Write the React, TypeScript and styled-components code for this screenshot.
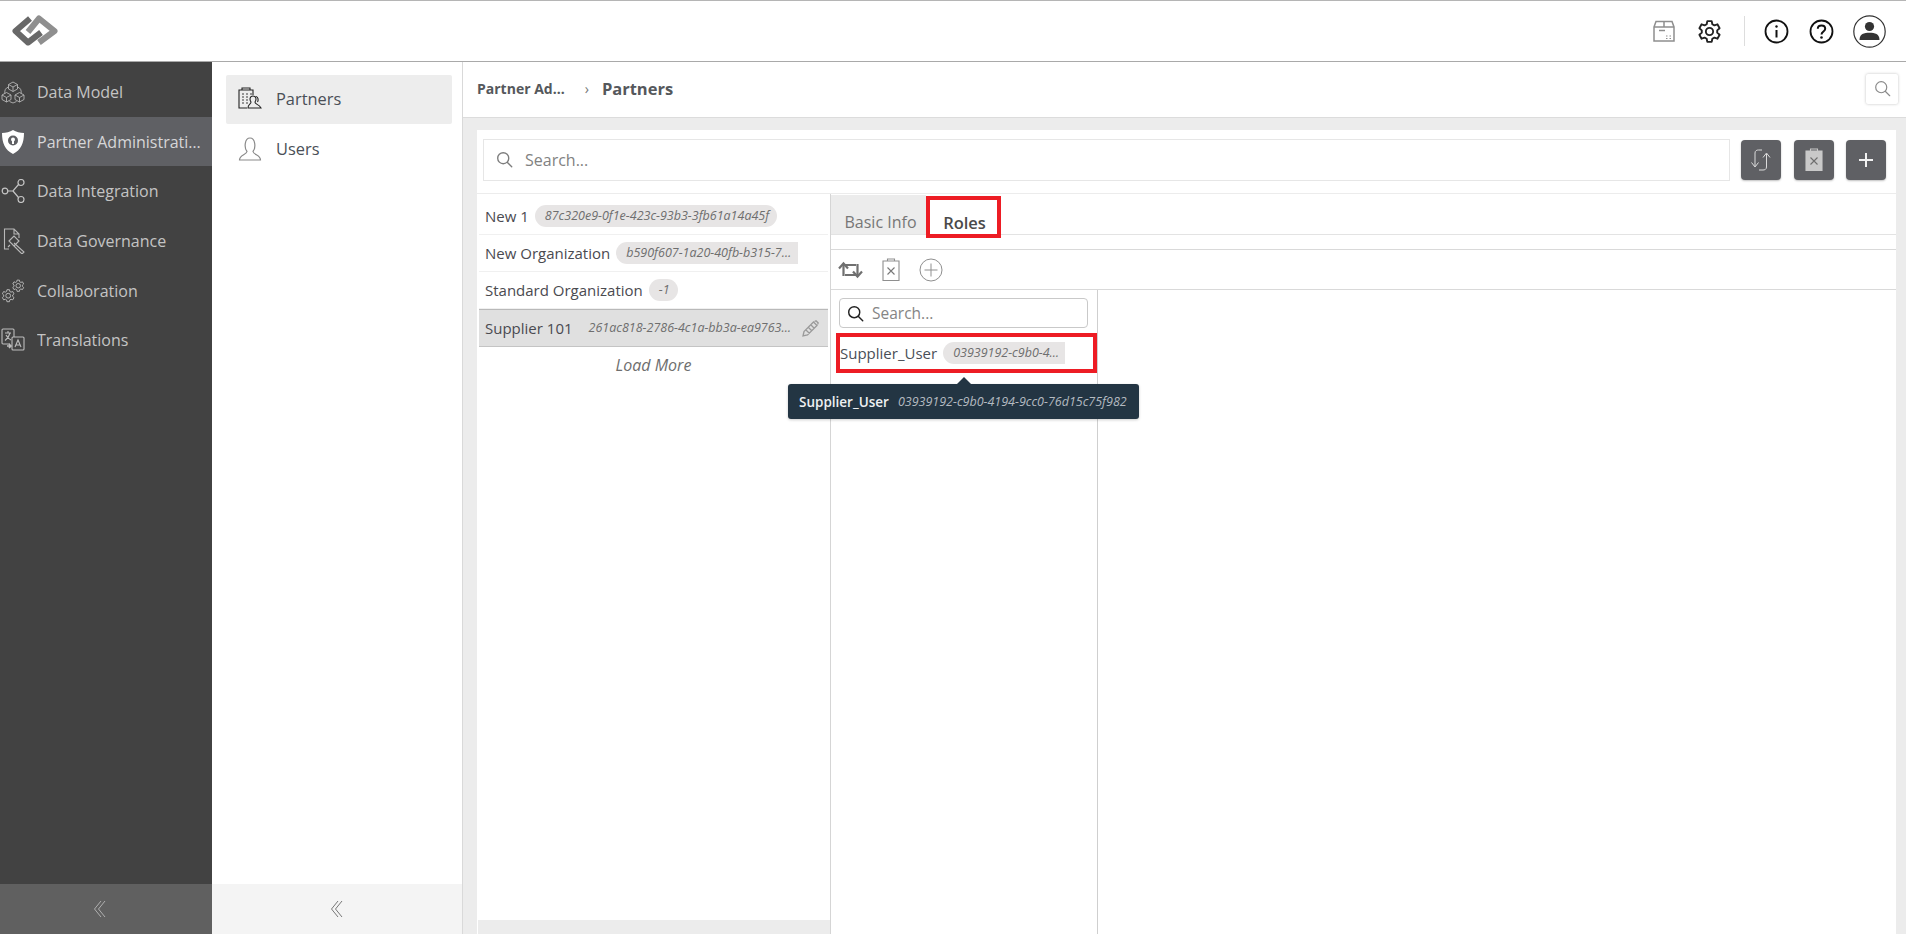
import React from "react";
import styled, { createGlobalStyle } from "styled-components";

const GlobalStyle = createGlobalStyle`
  html, body {
    margin: 0;
    padding: 0;
    height: 100%;
    overflow: hidden;
    background: #fff;
    font-family: "Open Sans", "Liberation Sans", sans-serif;
  }
  * { box-sizing: border-box; }
`;

const Page = styled.div`
  width: 1906px;
  height: 934px;
  display: flex;
  flex-direction: column;
  overflow: hidden;
`;

const TopBar = styled.header`
  height: 62px;
  flex: none;
  display: flex;
  align-items: center;
  justify-content: space-between;
  background: #fff;
  border-top: 1px solid #b5b5b5;
  border-bottom: 1px solid #a9a9a9;
  padding: 0 20px 0 12px;
`;

const TopIcons = styled.div`
  display: flex;
  align-items: center;
`;

const TopDivider = styled.div`
  width: 1px;
  height: 30px;
  background: #ddd;
  margin: 0 19px 0 22px;
`;

const Body = styled.div`
  flex: 1;
  display: flex;
  min-height: 0;
`;

const Sidebar = styled.nav`
  width: 212px;
  flex: none;
  display: flex;
  flex-direction: column;
  background: #424242;
`;

const SideList = styled.div`
  flex: 1;
  padding-top: 5px;
`;

const SideItem = styled.div<{ $active?: boolean }>`
  height: 49.7px;
  display: flex;
  align-items: center;
  gap: 12px;
  padding-left: 1px;
  color: ${(p) => (p.$active ? "#d6d6d8" : "#c4c4c4")};
  background: ${(p) => (p.$active ? "#5f6064" : "transparent")};
  font-size: 16px;
  white-space: nowrap;
  overflow: hidden;
`;

const SideLabel = styled.span`
  width: 168px;
  overflow: hidden;
  text-overflow: ellipsis;
`;

const CollapseBar = styled.div<{ $light?: boolean }>`
  height: 50px;
  flex: none;
  display: flex;
  align-items: center;
  justify-content: center;
  padding-right: ${(p) => (p.$light ? "0" : "12px")};
  background: ${(p) => (p.$light ? "#f4f4f4" : "#606060")};
  color: ${(p) => (p.$light ? "#777" : "#b0b0b0")};
`;

const SubNav = styled.aside`
  width: 251px;
  flex: none;
  display: flex;
  flex-direction: column;
  background: #fff;
  border-right: 1px solid #d9d9d9;
`;

const SubList = styled.div`
  flex: 1;
  padding: 13px 10px 0 14px;
  display: flex;
  flex-direction: column;
  gap: 1px;
`;

const SubItem = styled.div<{ $active?: boolean }>`
  height: 49px;
  display: flex;
  align-items: center;
  gap: 14px;
  padding: 0 0 2px 12px;
  border-radius: 2px;
  font-size: 16.4px;
  color: #4a4f57;
  background: ${(p) => (p.$active ? "#ededed" : "transparent")};
`;

const Main = styled.main`
  flex: 1;
  min-width: 0;
  display: flex;
  flex-direction: column;
  background: #ececec;
`;

const Crumbs = styled.div`
  height: 56px;
  flex: none;
  display: flex;
  align-items: center;
  background: #fff;
  border-bottom: 1px solid #dcdcdc;
  padding: 0 8px 2px 14px;
  margin-bottom: 12px;
`;

const CrumbParent = styled.span`
  font-size: 14px;
  font-weight: 700;
  color: #55585c;
`;

const CrumbSep = styled.span`
  font-size: 14px;
  color: #777;
  margin: 0 13px 0 20px;
`;

const CrumbCurrent = styled.span`
  font-size: 16.5px;
  font-weight: 700;
  color: #55585c;
`;

const CrumbSearch = styled.div`
  margin-left: auto;
  width: 32px;
  height: 30px;
  display: flex;
  align-items: center;
  justify-content: center;
  background: #fff;
  border-radius: 2px;
  box-shadow: 0 0 3px rgba(0, 0, 0, 0.25);
`;

const Card = styled.section`
  flex: 1;
  min-height: 0;
  display: flex;
  flex-direction: column;
  background: #fff;
  margin: 0 10px 0 14px;
`;

const SearchRow = styled.div`
  height: 64px;
  flex: none;
  display: flex;
  align-items: center;
  gap: 12.5px;
  padding: 0 10px 4px 6px;
  border-bottom: 1px solid #ececec;
`;

const SearchBox = styled.div`
  flex: 1;
  height: 42px;
  display: flex;
  align-items: center;
  gap: 12px;
  padding-left: 12px;
  margin-right: -1.5px;
  border: 1px solid #e6e6e6;
  font-size: 16px;
  color: #828282;
`;

const ActionButton = styled.div`
  width: 40px;
  height: 40px;
  display: flex;
  align-items: center;
  justify-content: center;
  background: #5f6064;
  border-radius: 4px;
  box-shadow: 0 1px 2px rgba(0, 0, 0, 0.25);
`;

const Split = styled.div`
  flex: 1;
  min-height: 0;
  display: flex;
`;

const ListColumn = styled.div`
  width: 354px;
  flex: none;
  display: flex;
  flex-direction: column;
  border-right: 1px solid #d5d5d5;
`;

const ListItems = styled.div`
  flex: 1;
  padding: 4px 2px 0 2px;
`;

const ListRow = styled.div<{ $selected?: boolean }>`
  height: ${(p) => (p.$selected ? "38px" : "37px")};
  display: flex;
  align-items: center;
  gap: 6px;
  padding: 0 9px 0 6px;
  font-size: 15px;
  color: #4a4a50;
  white-space: nowrap;
  background: ${(p) => (p.$selected ? "#e0e0e0" : "#fff")};
  border-bottom: 1px solid ${(p) => (p.$selected ? "#c4c4c4" : "#f0f0f0")};
  border-top: ${(p) => (p.$selected ? "1px solid #b9b9b9" : "none")};
`;

const IdChip = styled.span<{ $width?: number; $plain?: boolean }>`
  display: inline-block;
  height: 22px;
  line-height: 22px;
  padding: 0 2px 0 10px;
  border-radius: 11px 0 0 11px;
  font-size: 12.5px;
  font-style: italic;
  color: #6e6e6e;
  background: ${(p) => (p.$plain ? "transparent" : "#e7e5e5")};
  max-width: ${(p) => (p.$width ? `${p.$width}px` : "none")};
  overflow: hidden;
  text-overflow: ellipsis;
  white-space: nowrap;
`;

const RoundChip = styled(IdChip)`
  padding: 0 8px 0 10px;
  border-radius: 11px;
`;

const EditIcon = styled.span`
  margin-left: auto;
  display: flex;
`;

const LoadMore = styled.div`
  height: 36px;
  display: flex;
  align-items: center;
  justify-content: center;
  font-size: 16px;
  font-style: italic;
  color: #6e6e6e;
`;

const ListFooter = styled.div`
  height: 14px;
  flex: none;
  margin-left: 1px;
  background: #ececec;
`;

const Detail = styled.div`
  flex: 1;
  min-width: 0;
  display: flex;
  flex-direction: column;
`;

const Tabs = styled.div`
  height: 41px;
  flex: none;
  display: flex;
  border-bottom: 1px solid #e3e3e3;
`;

const Tab = styled.div<{ $active?: boolean }>`
  height: ${(p) => (p.$active ? "42px" : "39px")};
  margin-top: ${(p) => (p.$active ? "2px" : "1px")};
  display: flex;
  align-items: center;
  justify-content: center;
  position: relative;
  z-index: 1;
  padding: ${(p) => (p.$active ? "10px 0 0 2px" : "15px 0 0 4px")};
  width: ${(p) => (p.$active ? "75px" : "95px")};
  font-size: ${(p) => (p.$active ? "16.5px" : "16px")};
  color: ${(p) => (p.$active ? "#4a4a4a" : "#777")};
  font-weight: ${(p) => (p.$active ? 600 : 400)};
  background: ${(p) => (p.$active ? "#fff" : "#ececec")};
  border: ${(p) => (p.$active ? "4px solid #ed1c24" : "none")};
`;

const TabGap = styled.div`
  height: 14px;
  flex: none;
`;

const Toolbar = styled.div`
  height: 41px;
  flex: none;
  display: flex;
  align-items: center;
  gap: 19px;
  padding-left: 7px;
  border-top: 1px solid #d9d9d9;
  border-bottom: 1px solid #d9d9d9;
`;

const RolesArea = styled.div`
  flex: 1;
  min-height: 0;
  display: flex;
`;

const RolesPane = styled.div`
  width: 267px;
  flex: none;
  position: relative;
  padding: 8px 9px 0 8px;
  border-right: 1px solid #cfcfcf;
`;

const RoleSearch = styled.div`
  height: 30px;
  display: flex;
  align-items: center;
  gap: 8px;
  padding-left: 7px;
  border: 1px solid #c9c9c9;
  border-radius: 4px;
  font-size: 15.5px;
  color: #858585;
`;

const RoleRow = styled.div`
  width: 261px;
  height: 40px;
  margin: 5px 0 0 -3px;
  display: flex;
  align-items: center;
  gap: 6px;
  border: 4px solid #ed1c24;
  font-size: 15px;
  color: #4a4f57;
  white-space: nowrap;
  overflow: hidden;
`;

const Tooltip = styled.div`
  position: absolute;
  left: -43px;
  top: 94px;
  z-index: 5;
  width: 351px;
  height: 35px;
  display: flex;
  align-items: center;
  gap: 9px;
  padding-left: 11px;
  background: #233543;
  border-radius: 3px;
  color: #eef0f2;
  font-size: 13.5px;
  font-weight: 600;
  white-space: nowrap;
  box-shadow: 0 1px 3px rgba(0, 0, 0, 0.2);
  &::before {
    content: "";
    position: absolute;
    left: 169px;
    top: -7px;
    border-left: 7px solid transparent;
    border-right: 7px solid transparent;
    border-bottom: 7px solid #233543;
  }
`;

const TooltipId = styled.span`
  font-size: 12.5px;
  font-weight: 400;
  font-style: italic;
  color: #b4bac0;
`;

const Empty = styled.div`
  flex: 1;
`;

const TopIcon = styled.span<{ $gap?: number }>`
  display: flex;
  margin-left: ${(p) => p.$gap ?? 0}px;
`;

const Logo = () => (
  <svg width="46" height="32" viewBox="0 0 46 32" fill="none" strokeWidth="6" strokeLinejoin="round">
    <path d="M16 17 L27 3.5 L42.5 16 L27 27.5" stroke="#8f8f8f" />
    <path d="M18 3.5 L3.5 16 L16 27.5 L29 17.5" stroke="#686868" />
  </svg>
);

const Box3d = () => (
  <svg width="24" height="24" viewBox="0 0 24 24" fill="none" stroke="#b4b4b4" strokeWidth="0.9">
    <path d="M12 2 L16.5 4.5 V9 L12 11.5 L7.5 9 V4.5 Z M7.5 4.5 L12 7 L16.5 4.5 M12 7 V11.5" />
    <path d="M5.5 12.5 L10 15 V19.5 L5.5 22 L1 19.5 V15 Z M1 15 L5.5 17.5 L10 15 M5.5 17.5 V22" />
    <path d="M18.5 12.5 L23 15 V19.5 L18.5 22 L14 19.5 V15 Z M14 15 L18.5 17.5 L23 15 M18.5 17.5 V22" />
    <path d="M7.5 7 C4.5 8 3.5 10 3.8 13.5 M16.5 7 C19.5 8 20.5 10 20.2 13.5 M8.5 21.5 L12 23 L15.5 21.5" />
  </svg>
);

const Shield = () => (
  <svg width="24" height="26" viewBox="0 0 24 26">
    <path d="M12 1 C15 3 19 4 23 4 C23 14 20 21 12 25 C4 21 1 14 1 4 C5 4 9 3 12 1 Z" fill="#fff" />
    <circle cx="12" cy="11.5" r="5" fill="#5f6064" />
    <circle cx="12" cy="10.5" r="2" fill="#fff" />
    <rect x="11" y="11" width="2" height="4" fill="#fff" />
  </svg>
);

const Nodes = () => (
  <svg width="24" height="24" viewBox="0 0 24 24" fill="none" stroke="#c4c4c4" strokeWidth="1.2">
    <circle cx="4" cy="12" r="2.8" />
    <circle cx="20" cy="3.5" r="3" />
    <circle cx="20" cy="20.5" r="3" />
    <path d="M7 12 H12 L17.5 5.5 M12 12 L17.5 18.5" />
  </svg>
);

const Gavel = () => (
  <svg width="24" height="26" viewBox="0 0 24 26" fill="none" stroke="#b8b8b8" strokeWidth="1.1">
    <path d="M8 21 H3.5 V1 H13 L18 6 V10 M13 1 V6 H18" />
    <path d="M8 13 L13 8 L18 13 L13 18 Z M13 15 L23 24 L21 26 L11 16 M7 19 L9 17" />
  </svg>
);

const gearPath =
  "M9.9 2 H14.1 L14.7 5 L16.7 6.1 L19.6 5.1 L21.7 8.9 L19.4 10.9 V13.1 L21.7 15.1 L19.6 18.9 L16.7 17.9 L14.7 19 L14.1 22 H9.9 L9.3 19 L7.3 17.9 L4.4 18.9 L2.3 15.1 L4.6 13.1 V10.9 L2.3 8.9 L4.4 5.1 L7.3 6.1 L9.3 5 Z";

const Gears = () => (
  <svg width="24" height="24" viewBox="0 0 24 24" fill="none" stroke="#b8b8b8">
    <g transform="translate(10.5 0) scale(0.56)" strokeWidth="1.7">
      <path d={gearPath} />
      <circle cx="12" cy="12" r="4" />
    </g>
    <g transform="translate(0 9.5) scale(0.6)" strokeWidth="1.6">
      <path d={gearPath} />
      <circle cx="12" cy="12" r="4" />
    </g>
  </svg>
);

const Translate = () => (
  <svg width="24" height="24" viewBox="0 0 24 24" fill="none" stroke="#bdbdbd" strokeWidth="1.1">
    <path d="M9 16 H2 a1 1 0 0 1 -1 -1 V2 a1 1 0 0 1 1 -1 H12 a1 1 0 0 1 1 1 V9" />
    <path d="M12 9 H22 a1 1 0 0 1 1 1 V21 a1 1 0 0 1 -1 1 H12 a1 1 0 0 1 -1 -1 V10 a1 1 0 0 1 1 -1 Z" />
    <path d="M4 5 H10 M7 3 V5 M9 5 C8 9 6 11 4 12.5 M5 7 C6 9 8 11 10 12" />
    <path d="M14 19 L17 12 L20 19 M15 17 H19" />
    <path d="M6 18 H10 M8 16 L10 18 L8 20" strokeWidth="1.6" />
  </svg>
);

const DoubleChevron = () => (
  <svg width="14" height="18" viewBox="0 0 14 18" fill="none" stroke="currentColor" strokeWidth="1">
    <path d="M8 1 L1.5 9 L8 17" />
    <path d="M12 1 L5.5 9 L12 17" />
  </svg>
);

const PartnersIcon = () => (
  <svg width="24" height="24" viewBox="0 0 24 24" fill="none" stroke="#222" strokeWidth="1.1">
    <path d="M9 21 H1 V3 H15 V8 M4 3 V1 H12 V3" />
    <path d="M4 7 H6 M8 7 H10 M12 7 H14 M4 10 H6 M8 10 H10 M4 13 H6 M8 13 H10 M4 16 H6 M8 16 H10" strokeWidth="1.6" stroke="#777" />
    <path d="M10 21 C10 17 13 17.5 13 15 C11.5 13 11.5 9 15 9 C18.5 9 18.5 13 17 15 C17 17.5 21 17 23 21 Z" />
    <path d="M18 9.5 C20.5 10 20.5 13.5 19.5 15" />
  </svg>
);

const UserIcon = () => (
  <svg width="24" height="24" viewBox="0 0 24 24" fill="none" stroke="#8a8a8a" strokeWidth="1.2">
    <path d="M1.5 23 C1.5 18 8.5 18 9 14.5 C6 11 6.5 1 12 1 C17.5 1 18 11 15 14.5 C15.5 18 22.5 18 22.5 23 Z" />
  </svg>
);

const Magnifier = ({ size, color, weight }: { size: number; color: string; weight: number }) => (
  <svg width={size} height={size} viewBox="0 0 20 20" fill="none" stroke={color} strokeWidth={weight} strokeLinecap="round">
    <circle cx="8.5" cy="8.5" r="6.5" />
    <path d="M13.5 13.5 L18.5 18.5" />
  </svg>
);

const PackageIcon = () => (
  <svg width="22" height="22" viewBox="0 0 22 22" fill="none" stroke="#8e8e8e" strokeWidth="1.5">
    <path d="M1 7 L3 1.5 H19 L21 7 V21 H1 Z M1 7 H21 M11 1.5 V7" />
    <path d="M6 10.5 H12" />
    <path d="M13 16 H14.5 M16.5 16 H18 M13 18.5 H14.5 M16.5 18.5 H18" strokeWidth="1" />
  </svg>
);

const GearIcon = () => (
  <svg width="25" height="25" viewBox="0 0 24 24" fill="none" stroke="#222" strokeWidth="1.8" strokeLinejoin="round">
    <path d={gearPath} />
    <circle cx="12" cy="12" r="3.5" />
  </svg>
);

const InfoIcon = () => (
  <svg width="25" height="25" viewBox="0 0 25 25" fill="none" stroke="#111" strokeWidth="1.8">
    <circle cx="12.5" cy="12.5" r="11" />
    <path d="M12.5 11 V18.5" strokeWidth="2" />
    <circle cx="12.5" cy="7.5" r="1.2" fill="#111" stroke="none" />
  </svg>
);

const HelpIcon = () => (
  <svg width="25" height="25" viewBox="0 0 25 25" fill="none" stroke="#111" strokeWidth="1.8">
    <circle cx="12.5" cy="12.5" r="11" />
    <path d="M8.8 9.8 C8.8 5.5 16.2 5.5 16.2 9.8 C16.2 12.5 12.5 12.5 12.5 15.5" strokeWidth="2" />
    <circle cx="12.5" cy="18.5" r="1.3" fill="#111" stroke="none" />
  </svg>
);

const AvatarIcon = () => (
  <svg width="33" height="33" viewBox="0 0 33 33" fill="none">
    <circle cx="16.5" cy="16.5" r="15.7" stroke="#333" strokeWidth="1.2" />
    <circle cx="16.5" cy="11.5" r="4.6" fill="#333" />
    <path d="M6.5 25 C6.5 19 11 17.8 16.5 17.8 C22 17.8 26.5 19 26.5 25 Z" fill="#333" />
  </svg>
);

const SyncIcon = () => (
  <svg width="22" height="24" viewBox="0 0 22 24" fill="none" stroke="#dcdcdc" strokeWidth="1">
    <path d="M5 18 V5 C5 2.5 7 2 8.5 2 H12" />
    <path d="M1.5 14.5 L5 19 L8.5 14.5" />
    <path d="M16.5 6 V19 C16.5 21.5 14.5 22 13 22 H9" />
    <path d="M13 9.5 L16.5 5 L20 9.5" />
  </svg>
);

const ClipboardX = ({ fill, stroke, mark }: { fill: string; stroke: string; mark: string }) => (
  <svg width="18" height="23" viewBox="0 0 18 23" fill={fill} stroke={stroke} strokeWidth="1.1">
    <path d="M5.5 3 V1 H12.5 V3" fill="none" />
    <path d="M1 3 H17 V22.5 H1 Z" />
    <path d="M5.5 9.5 L12.5 16.5 M12.5 9.5 L5.5 16.5" stroke={mark} fill="none" />
  </svg>
);

const PlusIcon = () => (
  <svg width="18" height="18" viewBox="0 0 18 18" stroke="#f2f2f2" strokeWidth="2">
    <path d="M9 2 V16 M2 9 H16" />
  </svg>
);

const PencilIcon = () => (
  <svg width="17" height="17" viewBox="0 0 17 17" fill="none" stroke="#9a9a9a" strokeWidth="1.3">
    <path d="M1 16 L2 11.5 L11.5 2 L15 5.5 L5.5 15 Z M4 10 L7.5 13.5 M6.5 7.5 L10 11 M9 5 L12.5 8.5" />
    <path d="M12.5 1.5 L14 0.8 L16.2 3 L15.5 4.5" />
  </svg>
);

const RefreshIcon = () => (
  <svg width="25" height="18" viewBox="0 0 25 18" fill="none" stroke="#707070" strokeWidth="2.2">
    <path d="M5.5 15 V4 H18" />
    <path d="M1 7.5 L5.5 2.5 L10 7.5" />
    <path d="M19.5 3 V14 H7" />
    <path d="M15 10.5 L19.5 15.5 L24 10.5" />
  </svg>
);

const CirclePlus = () => (
  <svg width="24" height="24" viewBox="0 0 24 24" fill="none" stroke="#8f8f8f" strokeWidth="1">
    <circle cx="12" cy="12" r="11" />
    <path d="M12 5.5 V18.5 M5.5 12 H18.5" />
  </svg>
);

const sideItems = [
  { label: "Data Model", icon: <Box3d /> },
  { label: "Partner Administration", icon: <Shield />, active: true },
  { label: "Data Integration", icon: <Nodes /> },
  { label: "Data Governance", icon: <Gavel /> },
  { label: "Collaboration", icon: <Gears /> },
  { label: "Translations", icon: <Translate /> },
];

export default function App() {
  return (
    <Page>
      <GlobalStyle />
      <TopBar>
        <Logo />
        <TopIcons>
          <PackageIcon />
          <TopIcon $gap={22}>
            <GearIcon />
          </TopIcon>
          <TopDivider />
          <InfoIcon />
          <TopIcon $gap={20}>
            <HelpIcon />
          </TopIcon>
          <TopIcon $gap={19}>
            <AvatarIcon />
          </TopIcon>
        </TopIcons>
      </TopBar>
      <Body>
        <Sidebar>
          <SideList>
            {sideItems.map((item) => (
              <SideItem key={item.label} $active={item.active}>
                {item.icon}
                <SideLabel>{item.label}</SideLabel>
              </SideItem>
            ))}
          </SideList>
          <CollapseBar>
            <DoubleChevron />
          </CollapseBar>
        </Sidebar>
        <SubNav>
          <SubList>
            <SubItem $active>
              <PartnersIcon />
              Partners
            </SubItem>
            <SubItem>
              <UserIcon />
              Users
            </SubItem>
          </SubList>
          <CollapseBar $light>
            <DoubleChevron />
          </CollapseBar>
        </SubNav>
        <Main>
          <Crumbs>
            <CrumbParent>Partner Ad...</CrumbParent>
            <CrumbSep>›</CrumbSep>
            <CrumbCurrent>Partners</CrumbCurrent>
            <CrumbSearch>
              <Magnifier size={17} color="#8a8a8a" weight={1.4} />
            </CrumbSearch>
          </Crumbs>
          <Card>
            <SearchRow>
              <SearchBox>
                <Magnifier size={17} color="#7d7d7d" weight={1.6} />
                Search...
              </SearchBox>
              <ActionButton>
                <SyncIcon />
              </ActionButton>
              <ActionButton>
                <ClipboardX fill="#c9c9c9" stroke="#c9c9c9" mark="#6e6e6e" />
              </ActionButton>
              <ActionButton>
                <PlusIcon />
              </ActionButton>
            </SearchRow>
            <Split>
              <ListColumn>
                <ListItems>
                  <ListRow>
                    New 1
                    <RoundChip>87c320e9-0f1e-423c-93b3-3fb61a14a45f</RoundChip>
                  </ListRow>
                  <ListRow>
                    New Organization
                    <IdChip $width={182}>b590f607-1a20-40fb-b315-7e2a90c1d4</IdChip>
                  </ListRow>
                  <ListRow>
                    Standard Organization
                    <RoundChip>-1</RoundChip>
                  </ListRow>
                  <ListRow $selected>
                    Supplier 101
                    <IdChip $plain $width={224}>261ac818-2786-4c1a-bb3a-ea9763f0c25d</IdChip>
                    <EditIcon>
                      <PencilIcon />
                    </EditIcon>
                  </ListRow>
                  <LoadMore>Load More</LoadMore>
                </ListItems>
                <ListFooter />
              </ListColumn>
              <Detail>
                <Tabs>
                  <Tab>Basic Info</Tab>
                  <Tab $active>Roles</Tab>
                </Tabs>
                <TabGap />
                <Toolbar>
                  <RefreshIcon />
                  <ClipboardX fill="none" stroke="#8f8f8f" mark="#777" />
                  <CirclePlus />
                </Toolbar>
                <RolesArea>
                  <RolesPane>
                    <RoleSearch>
                      <Magnifier size={17} color="#222" weight={1.7} />
                      Search...
                    </RoleSearch>
                    <RoleRow>
                      Supplier_User
                      <IdChip $width={122}>03939192-c9b0-4194-9cc0-76d15c75f982</IdChip>
                    </RoleRow>
                    <Tooltip>
                      Supplier_User
                      <TooltipId>03939192-c9b0-4194-9cc0-76d15c75f982</TooltipId>
                    </Tooltip>
                  </RolesPane>
                  <Empty />
                </RolesArea>
              </Detail>
            </Split>
          </Card>
        </Main>
      </Body>
    </Page>
  );
}
